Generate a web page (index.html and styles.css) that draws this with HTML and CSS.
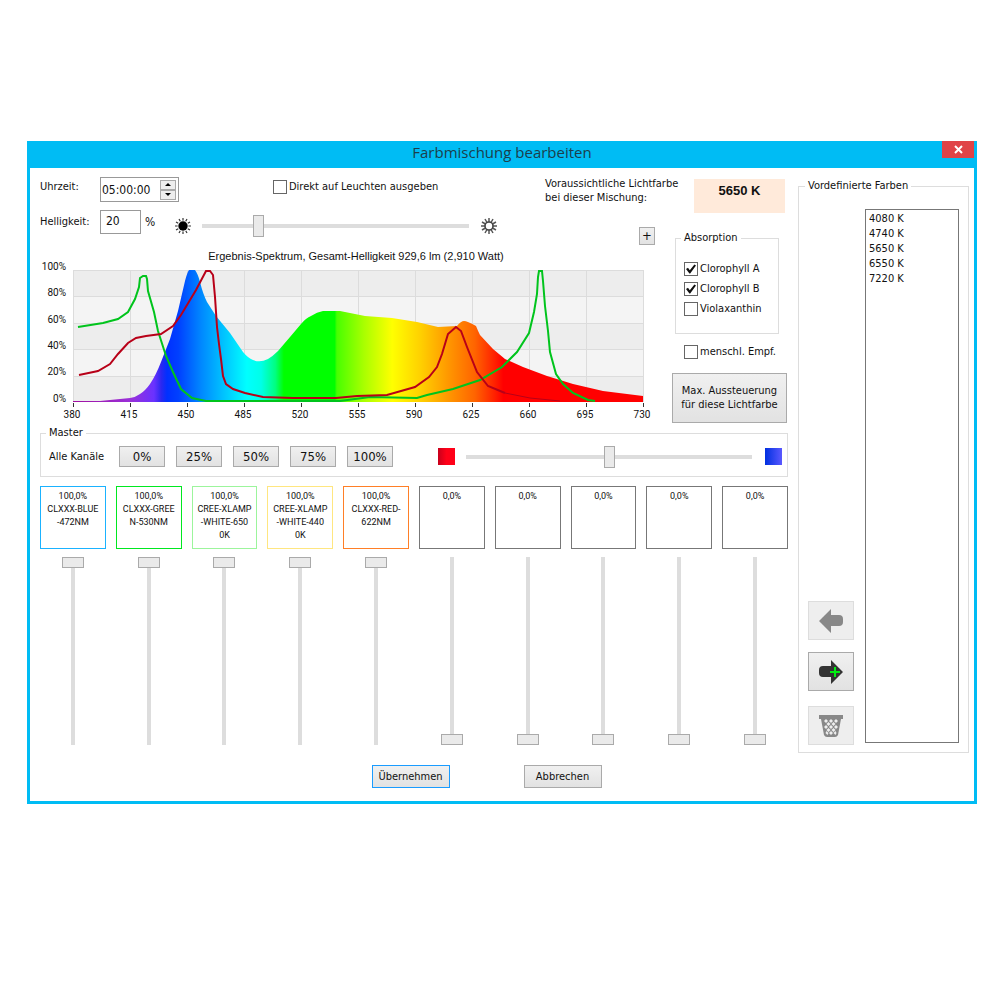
FILE: index.html
```html
<!DOCTYPE html>
<html lang="de">
<head>
  <meta charset="UTF-8" />
  <meta name="viewport" content="width=device-width, initial-scale=1.0"/>
  <title>Farbmischung bearbeiten</title>
  <link rel="stylesheet" href="styles.css">
</head>
<body>
  <form class="dialog">
    <header class="title-bar">
      <h1>Farbmischung bearbeiten</h1>
      <button type="button" class="close" aria-label="Schließen">
        <svg width="9" height="9" viewBox="0 0 9 9"><path d="M1 1L8 8M8 1L1 8" stroke="#fff" stroke-width="2"/></svg>
      </button>
    </header>

    <div class="content">
      <main class="mixer">
        <div class="upper">
          <div class="spectrum">
            <div class="row row-time">
              <label class="caption" for="time">Uhrzeit:</label>
              <div class="spinner">
                <input type="text" id="time" value="05:00:00">
                <div class="spinner-buttons">
                  <button type="button" aria-label="Später"><svg width="6" height="3" viewBox="0 0 6 3"><path d="M0 3L3 0L6 3Z"/></svg></button>
                  <button type="button" aria-label="Früher"><svg width="6" height="3" viewBox="0 0 6 3"><path d="M0 0L3 3L6 0Z"/></svg></button>
                </div>
              </div>
              <label class="check direct"><input type="checkbox">Direkt auf Leuchten ausgeben</label>
              <p class="expected">Voraussichtliche Lichtfarbe<br>bei dieser Mischung:</p>
            </div>

            <div class="row row-brightness">
              <label class="caption" for="brightness">Helligkeit:</label>
              <input type="text" class="percent" id="brightness" value="20">
              <span class="unit">%</span>
              <svg class="sun" width="18" height="18" viewBox="-9 -9 18 18">
                <path d="M0-8V8M-8 0H8M-4-7L4 7M4-7L-4 7M-7-4L7 4M-7 4L7-4" stroke="#333" stroke-width="1.2"/>
                <circle r="5.500" fill="#fff"/>
                <circle r="4.700" fill="#000"/>
              </svg>
              <input type="range" class="slider" aria-label="Helligkeit" min="0" max="100" value="20">
              <svg class="sun" width="18" height="18" viewBox="-9 -9 18 18">
                <path d="M0-8V8M-8 0H8M-4-7L4 7M4-7L-4 7M-7-4L7 4M-7 4L7-4" stroke="#555" stroke-width="1.5"/>
                <circle r="4" fill="#fff" stroke="#444" stroke-width="1.6"/>
              </svg>
              <button type="button" class="btn plus">+</button>
            </div>

            <h2 class="chart-title">Ergebnis-Spektrum, Gesamt-Helligkeit 929,6 lm (2,910 Watt)</h2>
            <svg class="chart" viewBox="0 0 632 160" role="img" aria-label="Ergebnis-Spektrum">
              <defs>
                <linearGradient id="rainbow" gradientUnits="userSpaceOnUse" x1="0" y1="0" x2="570" y2="0">
                  <stop offset="0" stop-color="#a010a0"/>
                  <stop offset="0.1" stop-color="#9a30d8"/>
                  <stop offset="0.142" stop-color="#6a32ff"/>
                  <stop offset="0.155" stop-color="#2a28f0"/>
                  <stop offset="0.165" stop-color="#0030ff"/>
                  <stop offset="0.185" stop-color="#0040ff"/>
                  <stop offset="0.225" stop-color="#0088ff"/>
                  <stop offset="0.265" stop-color="#00c4ff"/>
                  <stop offset="0.305" stop-color="#00ffff"/>
                  <stop offset="0.33" stop-color="#00ffe8"/>
                  <stop offset="0.355" stop-color="#00ff80"/>
                  <stop offset="0.37" stop-color="#00ff00"/>
                  <stop offset="0.459" stop-color="#00ff00"/>
                  <stop offset="0.463" stop-color="#48ff00"/>
                  <stop offset="0.51" stop-color="#a8ff00"/>
                  <stop offset="0.56" stop-color="#ffff00"/>
                  <stop offset="0.61" stop-color="#ffd000"/>
                  <stop offset="0.665" stop-color="#ff9000"/>
                  <stop offset="0.705" stop-color="#ff6400"/>
                  <stop offset="0.74" stop-color="#ff2000"/>
                  <stop offset="0.755" stop-color="#ff0000"/>
                </linearGradient>
              </defs>
              <g transform="translate(33 6)">
                <rect width="570" height="132" fill="#f4f4f4"/>
                <path d="M0 0H570V26H0ZM0 53H570V79H0ZM0 106H570V132H0Z" fill="#ededed"/>
                <path class="grid" d="M0 .5H570M0 26.5H570M0 53.5H570M0 79.5H570M0 106.5H570M.5 0V132M57.5 0V132M114.5 0V132M171.5 0V132M228.5 0V132M285.5 0V132M342.5 0V132M399.5 0V132M456.5 0V132M513.5 0V132M570.5 0V132"/>
                <path fill="url(#rainbow)" d="M0 131L27 131L57 128Q63 127 67 124Q72 121 77 114Q83 105 88 92L97 69L105 41L112 11Q114 3 116 0H122Q125 4 127 12Q130 24 134 32L143 46L157 63L170 82Q175 88 180 90Q187 93 195 89Q200 86 205 81L217 67L228 54Q233 48 238 46Q244 42 250 41L267 41L292 46L319 48L344 52L365 57L384 56Q388 51 391 51Q394 51 403 56Q405 61 407 65L420 79L432 89L450 97L474 106L500 114L530 121L570 126V132H0Z"/>
                <polyline class="line green" points="5,57 30,53 45,49 55,42 62,29 66,17 67,8 70,6 73,6 74,9 75,21 81,42 85,61 93,86 100,102 108,119 119,128 133,131 267,131 297,127 344,128 354,125 380,119 407,110 429,97 444,82 456,63 461,42 464,24 465,7 466,1 469,1 470,11 472,36 475,61 477,82 483,104 490,114 500,123 515,130 522,131"/>
                <polyline class="line red" points="6,105 25,101 37,94 45,84 55,73 63,68 73,66 88,64 100,56 108,45 123,20 133,1 137,1 140,5 142,27 144,57 146,74 148,89 150,106 153,114 160,119 172,123 190,127 220,128 263,128 284,126 314,125 342,117 356,107 364,97 369,84 375,64 383,57 388,61 394,77 404,102 415,116 432,123"/>
                <polyline class="line red thin" points="432,123 457,128 487,131"/>
                <path d="M.5 133V137M57.5 133V137M114.5 133V137M171.5 133V137M228.5 133V137M285.5 133V137M342.5 133V137M399.5 133V137M456.5 133V137M513.5 133V137M570.5 133V137" stroke="#333"/>
              </g>
              <g class="axis y-axis">
                <text x="26" y="6">100%</text>
                <text x="26" y="32">80%</text>
                <text x="26" y="59">60%</text>
                <text x="26" y="85">40%</text>
                <text x="26" y="111">20%</text>
                <text x="26" y="138">0%</text>
              </g>
              <g class="axis x-axis">
                <text x="32" y="154">380</text>
                <text x="89" y="154">415</text>
                <text x="146" y="154">450</text>
                <text x="203" y="154">485</text>
                <text x="260" y="154">520</text>
                <text x="317" y="154">555</text>
                <text x="374" y="154">590</text>
                <text x="431" y="154">625</text>
                <text x="488" y="154">660</text>
                <text x="545" y="154">695</text>
                <text x="602" y="154">730</text>
              </g>
            </svg>
          </div>

          <aside class="side">
            <output class="kelvin">5650 K</output>
            <fieldset class="group absorption">
              <legend>Absorption</legend>
              <label class="check"><input type="checkbox" checked>Clorophyll A</label>
              <label class="check"><input type="checkbox" checked>Clorophyll B</label>
              <label class="check"><input type="checkbox">Violaxanthin</label>
            </fieldset>
            <label class="check human"><input type="checkbox">menschl. Empf.</label>
            <button type="button" class="btn max">Max. Aussteuerung<br>für diese Lichtfarbe</button>
          </aside>
        </div>

        <fieldset class="group master">
          <legend>Master</legend>
          <span class="all">Alle Kanäle</span>
          <div class="presets">
            <button type="button" class="btn">0%</button>
            <button type="button" class="btn">25%</button>
            <button type="button" class="btn">50%</button>
            <button type="button" class="btn">75%</button>
            <button type="button" class="btn">100%</button>
          </div>
          <span class="swatch swatch-red"></span>
          <input type="range" class="slider" aria-label="Rot bis Blau" min="0" max="100" value="50">
          <span class="swatch swatch-blue"></span>
        </fieldset>

        <div class="channels">
          <div class="channel">
            <label class="channel-box blue" for="ch1">100,0%<br>CLXXX-BLUE<br>-472NM</label>
            <input type="range" class="fader" id="ch1" value="100">
          </div>
          <div class="channel">
            <label class="channel-box lime" for="ch2">100,0%<br>CLXXX-GREE<br>N-530NM</label>
            <input type="range" class="fader" id="ch2" value="100">
          </div>
          <div class="channel">
            <label class="channel-box mint" for="ch3">100,0%<br>CREE-XLAMP<br>-WHITE-650<br>0K</label>
            <input type="range" class="fader" id="ch3" value="100">
          </div>
          <div class="channel">
            <label class="channel-box yellow" for="ch4">100,0%<br>CREE-XLAMP<br>-WHITE-440<br>0K</label>
            <input type="range" class="fader" id="ch4" value="100">
          </div>
          <div class="channel">
            <label class="channel-box orange" for="ch5">100,0%<br>CLXXX-RED-<br>622NM</label>
            <input type="range" class="fader" id="ch5" value="100">
          </div>
          <div class="channel">
            <label class="channel-box" for="ch6">0,0%</label>
            <input type="range" class="fader" id="ch6" value="0">
          </div>
          <div class="channel">
            <label class="channel-box" for="ch7">0,0%</label>
            <input type="range" class="fader" id="ch7" value="0">
          </div>
          <div class="channel">
            <label class="channel-box" for="ch8">0,0%</label>
            <input type="range" class="fader" id="ch8" value="0">
          </div>
          <div class="channel">
            <label class="channel-box" for="ch9">0,0%</label>
            <input type="range" class="fader" id="ch9" value="0">
          </div>
          <div class="channel">
            <label class="channel-box" for="ch10">0,0%</label>
            <input type="range" class="fader" id="ch10" value="0">
          </div>
        </div>
      </main>

      <fieldset class="group presets-panel">
        <legend>Vordefinierte Farben</legend>
        <div class="tools">
          <button type="button" class="btn tool" aria-label="Farbe übernehmen" disabled>
            <svg width="24" height="24" viewBox="0 0 24 24"><path d="M0 12L12 0V6H20Q24 6 24 10V13Q24 17 20 17H12V24Z" fill="#888"/></svg>
          </button>
          <button type="button" class="btn tool" aria-label="Farbe hinzufügen">
            <svg width="24" height="24" viewBox="0 0 24 24"><path d="M24 12L12 0V6H4Q0 6 0 10V13Q0 17 4 17H12V24Z" fill="#333"/><path d="M16 7V17M11 12H21" stroke="#0e1" stroke-width="2"/></svg>
          </button>
          <button type="button" class="btn tool tool-delete" aria-label="Farbe löschen" disabled>
            <svg width="24" height="24" viewBox="0 0 24 24">
              <path d="M0 1H24V5H0ZM2 5H22L19 21Q18 23 16 23H8Q6 23 5 21Z" fill="#888"/>
              <g fill="#eee">
                <path d="M7 5l2 2-2 2-2-2zM12 5l2 2-2 2-2-2zM17 5l2 2-2 2-2-2z"/>
                <path d="M9.500 8l2 2-2 2-2-2zM14.500 8l2 2-2 2-2-2zM7 11l2 2-2 2-2-2zM12 11l2 2-2 2-2-2zM17 11l2 2-2 2-2-2z"/>
                <path d="M9.500 14l2 2-2 2-2-2zM14.500 14l2 2-2 2-2-2zM7.500 17l2 2-1 2-2-2zM12 17l2 2-2 2-2-2zM16.500 17l1 2-1 2-2-2z"/>
              </g>
            </svg>
          </button>
        </div>
        <select class="color-list" size="10" aria-label="Vordefinierte Farben">
          <option>4080 K</option>
          <option>4740 K</option>
          <option>5650 K</option>
          <option>6550 K</option>
          <option>7220 K</option>
        </select>
      </fieldset>
    </div>

    <footer class="actions">
      <button type="submit" class="btn primary">Übernehmen</button>
      <button type="button" class="btn">Abbrechen</button>
    </footer>
  </form>
</body>
</html>
```

FILE: styles.css
```css
* {
  box-sizing: border-box;
}

body {
  margin: 0;
  padding: 141px 23px 0 27px;
  background: #fff;
  color: #111;
  font-family: "DejaVu Sans Condensed", "Noto Sans", sans-serif;
  font-size: 11px;
  line-height: 14px;
}

button,
input,
select {
  font: inherit;
  color: inherit;
  margin: 0;
}

.dialog {
  background: #fff;
  border: 3px solid #00bcf4;
  border-top: 0;
}

.title-bar {
  display: flex;
  justify-content: center;
  position: relative;
  height: 27px;
  background: #00bcf4;
}

.title-bar h1 {
  margin: 0;
  font-family: "Open Sans", sans-serif;
  font-size: 15px;
  font-weight: 400;
  line-height: 23px;
  color: #1c3f4c;
}

.close {
  position: absolute;
  top: 0;
  right: 0;
  width: 32px;
  height: 17px;
  padding: 0;
  border: 0;
  background: #e04347;
  line-height: 0;
}

.content {
  display: flex;
  gap: 10px;
  padding: 8px 5px 0 10px;
}

.mixer {
  flex: 1;
  min-width: 0;
}

.upper {
  display: flex;
}

.spectrum {
  flex: 1;
  min-width: 0;
}

.row {
  display: flex;
  align-items: flex-start;
}

.row-time {
  height: 34px;
}

.caption {
  width: 60px;
  padding-top: 4px;
  white-space: nowrap;
}

.spinner {
  display: flex;
  align-items: center;
  width: 79px;
  height: 25px;
  margin-top: 1px;
  padding-right: 2px;
  border: 1px solid #999;
}

.spinner input {
  flex: 1;
  min-width: 0;
  padding: 0 1px;
  border: 0;
  background: none;
}

.spinner-buttons {
  display: flex;
  flex-direction: column;
  width: 16px;
}

.spinner-buttons button {
  display: flex;
  align-items: center;
  justify-content: center;
  height: 10px;
  padding: 0;
  border: 1px solid #aaa;
  background: #eee;
}

.check {
  display: flex;
  align-items: center;
  gap: 2px;
  white-space: nowrap;
}

.check input {
  appearance: none;
  position: relative;
  flex: none;
  width: 14px;
  height: 14px;
  border: 1px solid #666;
  background: #fff;
}

.check input:checked::after {
  content: "";
  position: absolute;
  inset: 1px;
  background: #111;
  clip-path: polygon(0 50%, 20% 38%, 38% 62%, 84% 4%, 100% 16%, 42% 96%, 34% 96%);
}

.direct {
  margin: 4px 0 0 94px;
}

.expected {
  margin: 1px 0 0 auto;
  width: 127px;
  white-space: nowrap;
}

.row-brightness {
  height: 37px;
}

.row-brightness .caption {
  padding-top: 5px;
}

.percent {
  width: 41px;
  height: 24px;
  padding: 0 5px 2px;
  border: 1px solid #999;
}

.spinner input,
.percent,
.unit {
  font-size: 12px;
}

.unit {
  width: 33px;
  padding: 5px 0 0 4px;
}

.sun {
  margin-top: 7px;
}

.row-brightness .slider {
  width: 267px;
  margin: 5px 11px 0 10px;
}

.slider,
.fader {
  appearance: none;
  background: linear-gradient(#ddd, #ddd) center no-repeat;
}

.slider {
  height: 22px;
  background-size: 100% 4px;
}

.slider::-webkit-slider-thumb {
  appearance: none;
  width: 11px;
  height: 22px;
  border: 1px solid #aaa;
  background: #eaeaea;
}

.btn {
  padding: 0;
  border: 1px solid #aaa;
  background: linear-gradient(#f0f0f0, #e2e2e2);
}

.plus {
  width: 16px;
  height: 18px;
  margin: 17px 17px 0 auto;
  font-size: 13px;
}

.chart-title {
  margin: 2px 0 1px;
  font-family: "Liberation Sans", sans-serif;
  font-size: 11px;
  font-weight: 400;
  text-align: center;
}

.chart {
  display: block;
  width: 100%;
  overflow: visible;
}

.grid {
  stroke: #dcdcdc;
}

.line {
  fill: none;
  stroke-width: 2;
}

.green {
  stroke: #00c41c;
}

.red {
  stroke: #b80018;
}

.thin {
  stroke-width: 1;
}

.axis {
  font-family: Roboto, sans-serif;
  font-size: 10px;
  fill: #111;
}

.y-axis {
  text-anchor: end;
}

.x-axis {
  text-anchor: middle;
}

.side {
  width: 116px;
}

.kelvin {
  display: block;
  width: 91px;
  height: 34px;
  margin: 3px 3px 18px auto;
  background: #ffeada;
  font-family: "Liberation Sans", sans-serif;
  font-size: 13px;
  font-weight: 700;
  line-height: 24px;
  text-align: center;
}

.group {
  min-width: 0;
  margin: 0;
  padding: 0;
  border: 1px solid #ddd;
}

.group legend {
  margin-left: -3px;
  padding: 0 3px;
}

.absorption {
  display: flex;
  flex-direction: column;
  gap: 6px;
  height: 103px;
  margin: 0 9px 0 3px;
  padding: 17px 0 0 8px;
}

.human {
  margin: 11px 0 0 12px;
}

.max {
  width: 115px;
  height: 50px;
  margin-top: 14px;
  line-height: 14px;
}

.master {
  display: flex;
  align-items: center;
  height: 51px;
  margin-top: 2px;
  padding: 0 5px 3px 8px;
}

.all {
  width: 70px;
}

.presets {
  display: flex;
  gap: 11px;
  margin-right: 45px;
}

.presets .btn {
  width: 46px;
  height: 21px;
  font-size: 13px;
}

.swatch {
  width: 17px;
  height: 17px;
}

.swatch-red {
  background: linear-gradient(to right, #c8001c, #ff0018 50%);
}

.swatch-blue {
  background: linear-gradient(to right, #0030e0, #5a58ff);
}

.master .slider {
  flex: 1;
  min-width: 0;
  margin: 0 13px 0 11px;
}

.channels {
  display: flex;
  gap: 10px;
  margin-top: 9px;
}

.channel {
  display: flex;
  flex: 1;
  flex-direction: column;
  align-items: center;
  min-width: 0;
}

.channel-box {
  width: 100%;
  height: 63px;
  padding-top: 3px;
  border: 1px solid #777;
  font-family: Roboto, sans-serif;
  font-size: 9px;
  line-height: 13px;
  text-align: center;
}

.blue {
  border-color: #1ab2ff;
}

.lime {
  border-color: #00e820;
}

.mint {
  border-color: #9cf59c;
}

.yellow {
  border-color: #ffe680;
}

.orange {
  border-color: #ff7f27;
}

.fader {
  writing-mode: vertical-lr;
  direction: rtl;
  width: 22px;
  height: 188px;
  margin-top: 8px;
  background-size: 4px 100%;
}

.fader::-webkit-slider-thumb {
  appearance: none;
  width: 22px;
  height: 11px;
  border: 1px solid #aaa;
  background: #eaeaea;
}

.presets-panel {
  display: flex;
  gap: 11px;
  width: 171px;
  margin-top: 3px;
  padding: 16px 9px 9px;
}

.tools {
  display: flex;
  flex-direction: column;
  justify-content: flex-end;
  gap: 12px;
  width: 46px;
  margin-bottom: -2px;
}

.tool {
  height: 39px;
  line-height: 0;
}

.tool:disabled {
  border-color: #ddd;
  background: #eee;
}

.tool-delete {
  margin-top: 3px;
}

.color-list {
  flex: 1;
  min-width: 0;
  height: 534px;
  padding: 2px 0;
  border: 1px solid #777;
  border-radius: 0;
  background: #fff;
}

.color-list option {
  min-height: 15px;
  padding: 0 3px;
  line-height: 15px;
}

.actions {
  display: flex;
  justify-content: center;
  gap: 74px;
  padding: 12px 31px 13px 0;
}

.actions .btn {
  width: 78px;
  height: 23px;
}

.actions .primary {
  border-color: #1a9cff;
}
```
